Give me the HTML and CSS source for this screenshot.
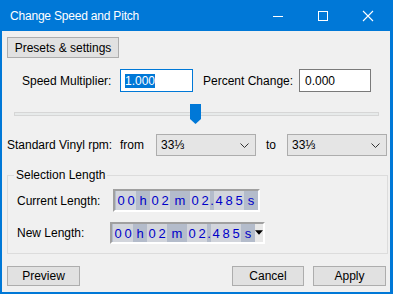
FILE: index.html
```html
<!DOCTYPE html>
<html>
<head>
<meta charset="utf-8">
<link rel="stylesheet" href="styles.css">
</head>
<body>
<div class="window">
  <div class="titlebar">
    <div class="title">Change Speed and Pitch</div>
    <div class="caption-btn">
      <svg width="12" height="12" viewBox="0 0 12 12"><line x1="1" y1="6.5" x2="11" y2="6.5" stroke="#fff" stroke-width="1"/></svg>
    </div>
    <div class="caption-btn">
      <svg width="12" height="12" viewBox="0 0 12 12"><rect x="1.5" y="1.5" width="9" height="9" fill="none" stroke="#fff" stroke-width="1"/></svg>
    </div>
    <div class="caption-btn">
      <svg width="12" height="12" viewBox="0 0 12 12"><path d="M1 1 L11 11 M11 1 L1 11" stroke="#fff" stroke-width="1.1"/></svg>
    </div>
  </div>
  <div class="client">
    <div class="row-presets">
      <div class="btn btn-presets">Presets &amp; settings</div>
    </div>
    <div class="row-speed">
      <div class="lbl lbl-speed">Speed Multiplier:</div>
      <div class="textbox focused"><span class="sel">1.000</span></div>
      <div class="lbl lbl-pct">Percent Change:</div>
      <div class="textbox tb-pct">0.000</div>
    </div>
    <div class="row-slider">
      <div class="slider">
        <div class="track"></div>
        <svg class="thumb" width="11" height="20" viewBox="0 0 11 20"><polygon points="0,0 11,0 11,15 5.5,20 0,15" fill="#0078d7"/></svg>
      </div>
    </div>
    <div class="row-vinyl">
      <div class="lbl lbl-vinyl">Standard Vinyl rpm:</div>
      <div class="lbl lbl-from">from</div>
      <div class="combo"><span>33⅓</span><svg width="9" height="5" viewBox="0 0 9 5"><polyline points="0.5,0.5 4.5,4.5 8.5,0.5" fill="none" stroke="#333" stroke-width="1"/></svg></div>
      <div class="lbl lbl-to">to</div>
      <div class="combo"><span>33⅓</span><svg width="9" height="5" viewBox="0 0 9 5"><polyline points="0.5,0.5 4.5,4.5 8.5,0.5" fill="none" stroke="#333" stroke-width="1"/></svg></div>
    </div>
    <fieldset class="group">
      <legend>Selection Length</legend>
      <div class="row-len row-cur">
        <div class="lbl lbl-cur">Current Length:</div>
        <div class="timectl">
          <span class="d">0</span><span class="d">0</span><span class="u uh">h</span><span class="d">0</span><span class="d">2</span><span class="u um">m</span><span class="d">0</span><span class="d">2</span><span class="u udot">.</span><span class="d">4</span><span class="d">8</span><span class="d">5</span><span class="u us">s</span>
        </div>
      </div>
      <div class="row-len row-new">
        <div class="lbl lbl-new">New Length:</div>
        <div class="timectl">
          <span class="d">0</span><span class="d">0</span><span class="u uh">h</span><span class="d">0</span><span class="d">2</span><span class="u um">m</span><span class="d">0</span><span class="d">2</span><span class="u udot">.</span><span class="d">4</span><span class="d">8</span><span class="d">5</span><span class="u us">s</span><span class="dd"><svg width="9" height="5" viewBox="0 0 9 5"><polygon points="0,0 9,0 4.5,5" fill="#000"/></svg></span>
        </div>
      </div>
    </fieldset>
    <div class="row-buttons">
      <div class="btn btn-bottom">Preview</div>
      <div class="spacer"></div>
      <div class="btn btn-bottom btn-cancel">Cancel</div>
      <div class="btn btn-bottom">Apply</div>
    </div>
  </div>
</div>
</body>
</html>
```
FILE: styles.css
```css
* { box-sizing: border-box; }
html, body { margin: 0; padding: 0; }
body {
  font-family: "Liberation Sans", Arial, sans-serif;
  font-size: 12px;
  color: #000;
  background: #fff;
}
.window {
  width: 393px;
  height: 294px;
  background: #0078d7;
  display: flex;
  flex-direction: column;
}
.titlebar {
  height: 31px;
  display: flex;
  align-items: center;
  padding-right: 3px;
  color: #fff;
}
.title {
  flex: 1;
  padding-left: 10px;
  font-size: 12px;
  letter-spacing: -0.2px;
}
.caption-btn {
  width: 45px;
  height: 31px;
  display: flex;
  align-items: center;
  justify-content: center;
}
.client {
  margin: 0 3px 2px 2px;
  height: 261px;
  background: #f0f0f0;
  display: flex;
  flex-direction: column;
}
.btn {
  background: #e1e1e1;
  border: 1px solid #adadad;
  display: flex;
  align-items: center;
  justify-content: center;
}
.row-presets { padding-left: 5px; margin-top: 6px; display: flex; }
.btn-presets { width: 112px; height: 21px; }

.lbl { display: flex; align-items: center; white-space: nowrap; }
.row-speed { display: flex; align-items: center; margin-top: 11px; padding-left: 20px; height: 23px; }
.lbl-speed { width: 98px; }
.textbox {
  width: 73px;
  height: 23px;
  background: #fff;
  border: 1px solid #7a7a7a;
  display: flex;
  align-items: center;
  padding-left: 4px;
}
.textbox.focused { border-color: #0078d7; }
.sel { background: #0078d7; color: #fff; line-height: 14px; display: inline-block; }
.lbl-pct { width: 96px; margin-left: 10px; }
.tb-pct { width: 72px; padding-left: 5px; }

.row-slider { margin-top: 12px; padding-left: 12px; height: 20px; }
.slider { position: relative; width: 365px; height: 20px; }
.track {
  position: relative;
  top: 8px;
  height: 4px;
  background: #e7eaea;
  border: 1px solid #d6d6d6;
}
.thumb { position: absolute; left: 176px; top: 0; }

.row-vinyl { display: flex; align-items: center; margin-top: 10px; padding-left: 5px; height: 22px; }
.lbl-vinyl { width: 113px; }
.lbl-from { width: 36px; }
.lbl-to { width: 21px; margin-left: 10px; }
.combo {
  width: 100px;
  height: 22px;
  background: #e5e5e5;
  border: 1px solid #adadad;
  display: flex;
  align-items: center;
  justify-content: space-between;
  padding: 0 6px 0 4px;
}
.combo svg { display: block; }

.group {
  margin: 12px 0 0 5px;
  width: 381px;
  border: 1px solid #dcdcdc;
  padding: 0 0 9px 9px;
  min-width: 0;
}
.group legend {
  padding: 0 2px;
  margin-left: -3px;
  line-height: 14px;
}
.row-len { display: flex; align-items: center; }
.row-cur { margin-top: 7px; height: 23px; }
.row-new { margin-top: 10px; height: 22px; }
.lbl-cur { width: 96px; }
.lbl-new { width: 93px; }

.timectl {
  display: flex;
  align-items: stretch;
  height: 100%;
  background: #b4bccb;
  border: 2px solid;
  border-color: #a0a0a0 #ffffff #ffffff #a0a0a0;
  padding-left: 1px;
  font-size: 13px;
  color: #0000c8;
}
.row-cur .timectl { width: 147px; }
.row-new .timectl { width: 155px; }
.timectl span { display: flex; align-items: center; justify-content: center; }
.timectl .d { width: 10px; background: #d2d5dc; }
.timectl .uh { width: 14px; }
.timectl .um { width: 20px; }
.timectl .udot { width: 4px; }
.timectl .us { width: 14px; }
.timectl .dd {
  width: 8px;
  background: #e8e8e8;
  align-items: flex-start;
  padding-top: 6px;
}

.row-buttons { display: flex; margin-top: 12px; padding: 0 4px 0 5px; height: 20px; }
.btn-bottom { width: 73px; height: 20px; }
.btn-cancel { width: 72px; margin-right: 9px; }
.spacer { flex: 1; }
```
